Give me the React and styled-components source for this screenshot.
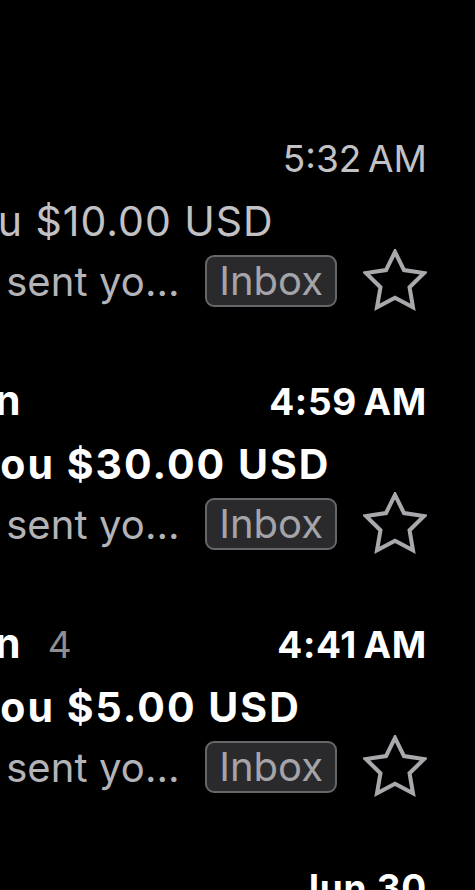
import React from 'react';
import styled, { createGlobalStyle } from 'styled-components';

const Global = createGlobalStyle`
  html, body { margin: 0; padding: 0; background: #000; }
  body { font-family: Inter, "Noto Sans", sans-serif; -webkit-font-smoothing: antialiased; }
`;

const Viewport = styled.div`
  width: 475px;
  height: 890px;
  overflow: hidden;
  background: #000;
  display: flex;
  justify-content: flex-end;
`;

const List = styled.div`
  flex: 0 0 853px;
  min-width: 0;
  box-sizing: border-box;
  padding: 98px 48px 0 0;
`;

const Row = styled.div`
  padding: 26px 0 31px 0;
`;

const TopLine = styled.div`
  display: flex;
  align-items: baseline;
  height: 66px;
  line-height: 66px;
  white-space: nowrap;
`;

const Sender = styled.span`
  font-size: 41px;
  font-weight: ${p => (p.$unread ? 700 : 400)};
  letter-spacing: ${p => (p.$unread ? 1.2 : 1)}px;
  color: ${p => (p.$unread ? '#fff' : '#c2c2c6')};
`;

const Count = styled.span`
  margin-left: 26px;
  font-size: 37px;
  font-weight: 400;
  color: #8e8e93;
`;

const Time = styled.span`
  margin-left: auto;
  font-size: 37px;
  font-weight: ${p => (p.$unread ? 700 : 400)};
  letter-spacing: ${p => (p.$unread ? 0.7 : 0)}px;
  color: ${p => (p.$unread ? '#fff' : '#c2c2c6')};
`;

const Subject = styled.div`
  height: 62px;
  line-height: 62px;
  white-space: nowrap;
  overflow: hidden;
  font-size: 41px;
  font-weight: ${p => (p.$unread ? 700 : 400)};
  letter-spacing: ${p => (p.$unread ? 2 : 1)}px;
  color: ${p => (p.$unread ? '#fff' : '#c2c2c6')};
`;

const PreviewLine = styled.div`
  display: flex;
  align-items: center;
  height: 58px;
`;

const PreviewText = styled.div`
  flex: 1 1 auto;
  min-width: 0;
  white-space: nowrap;
  overflow: hidden;
  text-overflow: ellipsis;
  font-size: 40px;
  letter-spacing: 0.1px;
  color: #b4b4b8;
`;

const Badge = styled.span`
  flex: none;
  margin-left: 12px;
  box-sizing: border-box;
  height: 52px;
  display: flex;
  align-items: center;
  padding: 0 12px;
  border: 2px solid #66666b;
  border-radius: 9px;
  background: #2a2a2d;
  color: #a4a4a9;
  font-size: 40px;
  line-height: 1;
`;

const StarButton = styled.span`
  flex: none;
  margin-left: 26px;
  display: flex;
`;

const Star = () => (
  <svg width="64" height="64" viewBox="1 1 22 22" fill="none">
    <polygon
      points="12 2 15.09 8.26 22 9.27 17 14.14 18.18 21.02 12 17.77 5.82 21.02 7 14.14 2 9.27 8.91 8.26"
      stroke="#a9a9ad"
      strokeWidth="1.4"
      strokeLinejoin="miter"
    />
  </svg>
);

const NS = '\u202F';

const mails = [
  { sender: 'PayPal', time: `5:32${NS}AM`, amount: '$10.00', unread: false },
  { sender: 'Nguyen Kevin Tran', time: `4:59${NS}AM`, amount: '$30.00', unread: true },
  { sender: 'Nguyen Kevin Tran', count: 4, time: `4:41${NS}AM`, amount: '$5.00', unread: true },
  { sender: 'PayPal', time: 'Jun 30', amount: '$20.00', unread: true },
];

export default function App() {
  return (
    <>
      <Global />
      <Viewport>
        <List>
          {mails.map((m, i) => (
            <Row key={i}>
              <TopLine>
                <Sender $unread={m.unread}>{m.sender}</Sender>
                {m.count && <Count>{m.count}</Count>}
                <Time $unread={m.unread}>{m.time}</Time>
              </TopLine>
              <Subject $unread={m.unread}>Kevin Tran sent you {m.amount} USD</Subject>
              <PreviewLine>
                <PreviewText>Hi there, Kevin Tran sent you {m.amount} USD with PayPal.</PreviewText>
                <Badge>Inbox</Badge>
                <StarButton><Star /></StarButton>
              </PreviewLine>
            </Row>
          ))}
        </List>
      </Viewport>
    </>
  );
}
